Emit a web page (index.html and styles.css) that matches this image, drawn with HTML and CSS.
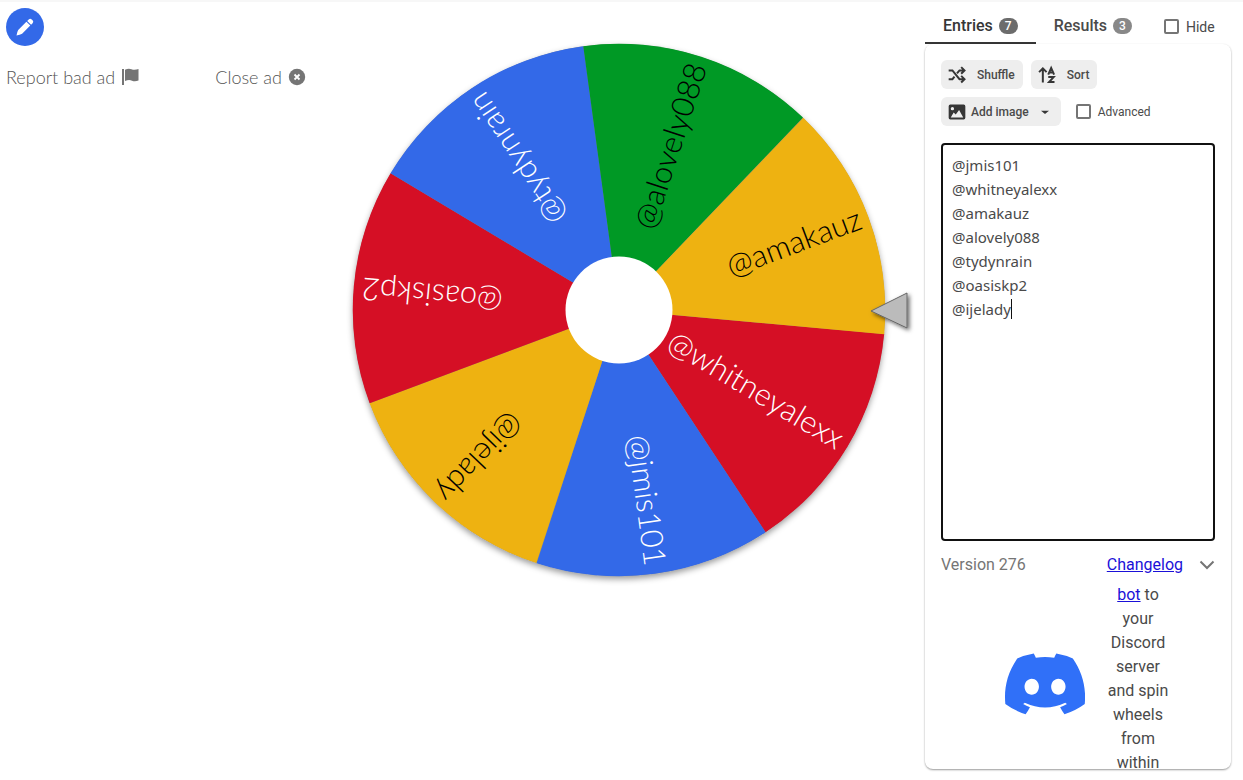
FILE: index.html
```html
<!DOCTYPE html>
<html lang="en">
<head>
<meta charset="utf-8">
<title>Wheel</title>
<link rel="stylesheet" href="styles.css">
</head>
<body>
<div class="page">
  <aside class="left">
    <button class="edit" aria-label="Edit title">
      <svg viewBox="0 0 24 24" width="24" height="24" fill="#fff"><path d="M3.500 20.500Q4 17 5.200 14.900L13.400 6.700 17.300 10.600 9.100 18.800Q7 20 3.500 20.500ZM14.200 5.900 15.700 4.400Q17.200 3 18.700 4.400L19.600 5.300Q21 6.800 19.600 8.300L18.100 9.800Z"/></svg>
    </button>
    <div class="ad-links">
      <button class="ad-link">Report bad ad
        <svg viewBox="0 0 18 18" width="18" height="18" fill="#757575"><path d="M1 1h2v16H1zM4 1.700Q7.500 0 10.500 1.200T17.500 1V12.500Q14 14 11 12.700T4 13Z"/></svg>
      </button>
      <button class="ad-link">Close ad
        <svg viewBox="0 0 18 18" width="18" height="18"><circle cx="9" cy="9" r="8.200" fill="#757575"/><path d="m6.500 6.500 5 5m0-5-5 5" stroke="#fff" stroke-width="1.800"/></svg>
      </button>
    </div>
  </aside>

  <main class="stage">
    <svg class="wheel" viewBox="-307 -310 613 620" role="img" aria-label="Wheel of names">
      <defs>
        <filter id="shadow" x="-10%" y="-10%" width="120%" height="120%"><feDropShadow dx="0" dy="3" stdDeviation="3" flood-opacity=".4"/></filter>
        <filter id="pshadow" x="-30%" y="-30%" width="170%" height="170%"><feDropShadow dx="2" dy="2" stdDeviation="2" flood-opacity=".6"/></filter>
        <path id="slice" d="M0 0 239.900 -115.500A266.300 266.300 0 0 1 239.900 115.500Z"/>
      </defs>
      <circle r="266" fill="#888" filter="url(#shadow)"/>
      <use href="#slice" fill="#d50f25" transform="rotate(30.900)"/>
      <use href="#slice" fill="#3369e8" transform="rotate(82.300)"/>
      <use href="#slice" fill="#eeb211" transform="rotate(133.800)"/>
      <use href="#slice" fill="#d50f25" transform="rotate(185.200)"/>
      <use href="#slice" fill="#3369e8" transform="rotate(236.600)"/>
      <use href="#slice" fill="#009925" transform="rotate(288)"/>
      <use href="#slice" fill="#eeb211" transform="rotate(339.500)"/>
      <circle r="53.500" fill="#fff"/>
      <g class="names light">
        <text x="258" y="9" transform="rotate(30.900)">@whitneyalexx</text>
        <text x="258" y="9" transform="rotate(82.300)">@jmis101</text>
        <text x="258" y="9" transform="rotate(185.200)">@oasiskp2</text>
        <text x="258" y="9" transform="rotate(236.600)">@tydynrain</text>
      </g>
      <g class="names dark">
        <text x="258" y="9" transform="rotate(133.800)">@ijelady</text>
        <text x="258" y="9" transform="rotate(288)">@alovely088</text>
        <text x="258" y="9" transform="rotate(339.500)">@amakauz</text>
      </g>
      <path d="M252 1 288 -17V18Z" fill="#bbb" stroke="#666" stroke-width="1" filter="url(#pshadow)"/>
    </svg>
  </main>

  <aside class="side">
    <nav class="tabs">
      <button class="tab active">Entries <span class="badge">7</span></button>
      <button class="tab">Results <span class="badge pale">3</span></button>
      <label class="check hide"><input type="checkbox">Hide</label>
    </nav>
    <section class="panel">
      <div class="tools">
        <button class="tool"><svg viewBox="0 0 24 24" width="20" height="20" fill="none" stroke="#363636" stroke-width="2.400"><path d="M2 6.500H6.500L15 17H20M2 17H6.500L9 14M12 10 15 6.500H20M17 2.500 21 6.500 17 10.500M17 13 21 17 17 21"/></svg><span class="wide">Shuffle</span></button>
        <button class="tool"><svg viewBox="0 0 24 24" width="20" height="20" fill="none" stroke="#363636" stroke-width="2.400"><path d="M7 21V4M2.500 8.500 7 4 11.500 8.500M13.500 11.500 17 3.500 20.500 11.500M14.500 9H19.500M13.500 14.500H20L14.500 20.500H21"/></svg><span class="wide">Sort</span></button>
        <button class="tool"><svg viewBox="0 0 24 24" width="20" height="20" fill="#363636"><path fill-rule="evenodd" d="M4 3H20Q22 3 22 5V19Q22 21 20 21H4Q2 21 2 19V5Q2 3 4 3ZM4.500 18.500H19.500L14.500 9.500 10.500 15 8 12.500ZM6.500 6A2 2 0 1 0 6.500 10 2 2 0 1 0 6.500 6Z"/></svg><span>Add image</span><svg class="arrow" viewBox="0 0 24 24" width="16" height="16" fill="#363636"><path d="m6 10 6 5 6-5z"/></svg></button>
        <label class="check advanced"><input type="checkbox">Advanced</label>
      </div>
      <div class="editor">
        <textarea rows="16" aria-label="Entries" spellcheck="false">@jmis101
@whitneyalexx
@amakauz
@alovely088
@tydynrain
@oasiskp2
@ijelady</textarea>
        <span class="caret"></span>
      </div>
      <div class="version"><span>Version 276</span><a href="#">Changelog</a>
        <button class="more" aria-label="Show more"><svg viewBox="0 0 16 10" width="16" height="10" fill="none" stroke="#757575" stroke-width="2"><path d="m1.500 1.500 6.500 6.500 6.500-6.500"/></svg></button>
      </div>
      <div class="promo">
        <svg viewBox="0 0 127 97" width="80" height="62" fill="#3070f8"><path d="M107.700,8.070A105.150,105.150,0,0,0,81.470,0a72.060,72.060,0,0,0-3.360,6.830A97.680,97.680,0,0,0,49,6.830,72.370,72.370,0,0,0,45.640,0,105.890,105.890,0,0,0,19.390,8.090C2.790,32.650-1.710,56.600.54,80.210h0A105.730,105.730,0,0,0,32.710,96.360,77.700,77.700,0,0,0,39.600,85.250a68.420,68.420,0,0,1-10.850-5.180c.91-.66,1.800-1.340,2.660-2a75.570,75.570,0,0,0,64.320,0c.87.71,1.760,1.390,2.660,2a68.680,68.680,0,0,1-10.870,5.190,77,77,0,0,0,6.890,11.100A105.250,105.250,0,0,0,126.600,80.220h0C129.240,52.840,122.090,29.110,107.700,8.070ZM42.450,65.690C36.180,65.690,31,60,31,53s5-12.740,11.430-12.740S54,46,53.890,53,48.840,65.690,42.450,65.690Zm42.240,0C78.410,65.690,73.250,60,73.250,53s5-12.740,11.440-12.740S96.230,46,96.120,53,91.080,65.690,84.690,65.690Z"/></svg>
        <p><a href="#">bot</a> to your Discord server and spin wheels from within</p>
      </div>
    </section>
  </aside>
</div>
</body>
</html>
```
FILE: styles.css
```css
* { box-sizing: border-box; }
body {
  margin: 0;
  background: #fff;
  color: #4a4a4a;
  font: 16px/24px Roboto, sans-serif;
}
button { border: 0; background: none; padding: 0; font: inherit; color: inherit; }
svg { display: block; flex: none; }
a { color: #1a10d8; }
.page {
  display: grid;
  grid-template-columns: 312px 1fr 306px;
  padding-right: 12px;
  height: 100vh;
  overflow: hidden;
  border-top: 2px solid #f7f7f7;
}
.left { padding: 6px; }
.edit {
  display: grid;
  place-items: center;
  width: 38px;
  height: 38px;
  border-radius: 50%;
  background: #3369e8;
}
.ad-links { display: flex; justify-content: space-between; margin-top: 19px; }
.ad-link {
  display: flex;
  align-items: center;
  gap: 6px;
  font: 300 18px/24px Lato, sans-serif;
  color: #555;
}
.stage { margin-top: -2px; }
.wheel { width: 100%; height: auto; }
.names { font: 300 31px Lato, sans-serif; text-anchor: end; }
.light { fill: #fff; }
.dark { fill: #000; }
.side { display: flex; flex-direction: column; padding-bottom: 11px; min-height: 0; }
.tabs { display: flex; height: 42px; padding-top: 7px; }
.tab {
  display: flex;
  align-items: center;
  gap: 6px;
  padding: 0 18px;
  border-bottom: 2px solid transparent;
  font-weight: 500;
  color: #4a4a4a;
}
.active { color: #363636; border-color: #363636; }
.badge {
  padding: 0 6px;
  border-radius: 8px;
  background: #6c6c6c;
  color: #fff;
  font-size: 12px;
  line-height: 16px;
}
.pale { background: #888; }
.check { display: flex; align-items: center; }
.check input {
  appearance: none;
  width: 15px;
  height: 15px;
  margin: 0 7px 0 0;
  border: 2px solid #757575;
  border-radius: 2px;
}
.hide { margin-left: 14px; font-size: 14px; }
.advanced { margin-left: 7px; font-size: 12px; }
.panel {
  display: flex;
  flex-direction: column;
  flex: 1;
  min-height: 0;
  padding: 16px 16px 0;
  border-radius: 8px;
  box-shadow: 0 1px 2px rgba(0, 0, 0, .4);
  overflow: hidden;
}
.tools { display: flex; flex-wrap: wrap; gap: 8px; }
.tool {
  display: flex;
  align-items: center;
  height: 29px;
  padding: 0 8px 0 6px;
  gap: 4px;
  border-radius: 6px;
  background: #eee;
  font-size: 12px;
  font-weight: 500;
}
.wide { padding-left: 6px; }
.arrow { margin-left: 4px; }
.editor { position: relative; margin-top: 17px; }
textarea {
  display: block;
  width: 100%;
  padding: 8px 9px 2px;
  border: 2px solid #111;
  border-radius: 4px;
  outline: 0;
  resize: none;
  overflow: hidden;
  color: #4a4a4a;
  font: 15px/24px "Noto Sans", sans-serif;
}
.caret { position: absolute; left: 70px; top: 156px; width: 1px; height: 20px; background: #111; }
.version { display: flex; align-items: center; gap: 16px; margin-top: 12px; color: #757575; }
.version a { margin-left: auto; }
.promo { display: flex; justify-content: center; gap: 20px; margin-top: 6px; padding-left: 20px; }
.promo svg { margin-top: 70px; }
.promo p { width: 66px; margin: 0; text-align: center; }
```
